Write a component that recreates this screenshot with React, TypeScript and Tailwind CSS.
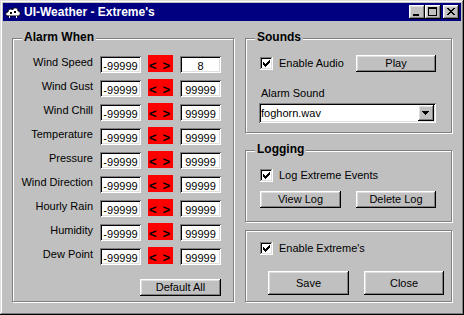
import React from "react";

const raised =
  "bg-[#c0c0c0] shadow-[inset_-1px_-1px_#000,inset_1px_1px_#fff,inset_-2px_-2px_#808080,inset_2px_2px_#dfdfdf]";
const sunken =
  "bg-white shadow-[inset_1px_1px_#808080,inset_-1px_-1px_#fff,inset_2px_2px_#000,inset_-2px_-2px_#dfdfdf]";

const rows = [
  { label: "Wind Speed", max: "8" },
  { label: "Wind Gust", max: "99999" },
  { label: "Wind Chill", max: "99999" },
  { label: "Temperature", max: "99999" },
  { label: "Pressure", max: "99999" },
  { label: "Wind Direction", max: "99999" },
  { label: "Hourly Rain", max: "99999" },
  { label: "Humidity", max: "99999" },
  { label: "Dew Point", max: "99999" },
];

// win95 check mark, pixel rows inside a 13x13 box
const checkPx: [number, number][] = [
  [9, 3], [8, 4], [9, 4], [3, 5], [7, 5], [8, 5], [9, 5],
  [3, 6], [4, 6], [6, 6], [7, 6], [8, 6],
  [3, 7], [4, 7], [5, 7], [6, 7], [7, 7],
  [4, 8], [5, 8], [6, 8], [5, 9],
];

function Checkbox({ label }: { label: string }) {
  return (
    <div className="flex items-center gap-[6px] h-[13px]">
      <svg width="13" height="13" viewBox="0 0 13 13" shapeRendering="crispEdges">
        <rect x="0" y="0" width="13" height="13" fill="#fff" />
        <rect x="0" y="0" width="12" height="1" fill="#808080" />
        <rect x="0" y="0" width="1" height="12" fill="#808080" />
        <rect x="1" y="1" width="10" height="1" fill="#000" />
        <rect x="1" y="1" width="1" height="10" fill="#000" />
        <rect x="1" y="11" width="11" height="1" fill="#dfdfdf" />
        <rect x="11" y="1" width="1" height="11" fill="#dfdfdf" />
        {checkPx.map(([x, y], i) => (
          <rect key={i} x={x} y={y} width="1" height="1" fill="#000" />
        ))}
      </svg>
      <span className="text-[11px] leading-[13px]">{label}</span>
    </div>
  );
}

function Button({ children, className }: { children: React.ReactNode; className: string }) {
  return (
    <div className={`${raised} flex items-center justify-center text-[11px] leading-[13px] ${className}`}>
      {children}
    </div>
  );
}

function Group({ title, className, children }: { title?: string; className: string; children?: React.ReactNode }) {
  return (
    <div className={`relative border border-[#808080] shadow-[inset_1px_1px_#fff,1px_1px_#fff] ${className}`}>
      {title && (
        <span className="absolute -top-[9px] left-[9px] px-[2px] bg-[#c0c0c0] text-[12px] leading-[14px] font-bold">
          {title}
        </span>
      )}
      {children}
    </div>
  );
}

function NumBox({ value }: { value: string }) {
  return (
    <div className={`${sunken} w-[41px] h-[17px] text-center text-[11px] leading-[11px] pt-[5px] whitespace-nowrap overflow-hidden`}>
      {value}
    </div>
  );
}

function TitleButton({ kind, className = "" }: { kind: "min" | "max" | "close"; className?: string }) {
  return (
    <div className={`${raised} w-[16px] h-[14px] ${className}`}>
      <svg width="16" height="14" viewBox="0 0 16 14" shapeRendering="crispEdges">
        {kind === "min" && <rect x="4" y="9" width="6" height="2" fill="#000" />}
        {kind === "max" && (
          <g fill="#000">
            <rect x="3" y="2" width="9" height="2" />
            <rect x="3" y="2" width="1" height="9" />
            <rect x="11" y="2" width="1" height="9" />
            <rect x="3" y="10" width="9" height="1" />
          </g>
        )}
        {kind === "close" && (
          <g fill="#000">
            {[0, 1, 2, 3, 4, 5, 6].map((i) => (
              <React.Fragment key={i}>
                <rect x={4 + i} y={3 + i} width="2" height="1" />
                <rect x={10 - i} y={3 + i} width="2" height="1" />
              </React.Fragment>
            ))}
          </g>
        )}
      </svg>
    </div>
  );
}

export default function App() {
  return (
    <div className="w-[464px] h-[315px] bg-[#c0c0c0] p-[3px] flex flex-col overflow-hidden text-black font-['Liberation_Sans',Arial,sans-serif] shadow-[inset_-1px_-1px_#000,inset_1px_1px_#dfdfdf,inset_-2px_-2px_#808080,inset_2px_2px_#fff]">
      {/* title bar */}
      <div className="h-[18px] bg-[#000080] flex items-center pl-[2px] pr-[2px]">
        <svg width="16" height="14" viewBox="0 0 16 14">
          <path
            d="M3 11 C0 11 0 7 3 7 C3 4 6 3 7.5 5 C8.5 2 13 2 13 6 C16 6 16 11 13 11 Z"
            fill="#fff"
            stroke="#000"
            strokeWidth="1"
          />
          <rect x="5" y="7" width="2" height="2" fill="#000" />
          <rect x="9" y="6" width="2" height="2" fill="#000" />
          <rect x="4" y="11" width="1" height="2" fill="#fff" />
          <rect x="11" y="11" width="1" height="2" fill="#fff" />
        </svg>
        <span className="ml-[3px] text-white font-bold text-[12px] leading-[14px]">UI-Weather - Extreme's</span>
        <div className="ml-auto flex">
          <TitleButton kind="min" />
          <TitleButton kind="max" />
          <TitleButton kind="close" className="ml-[2px]" />
        </div>
      </div>

      {/* body */}
      <div className="flex pl-[9px] pt-[17px]">
        <Group title="Alarm When" className="w-[222px] h-[264px]">
          <div className="flex flex-col gap-[7px] pt-[17px]">
            {rows.map((r) => (
              <div key={r.label} className="flex items-start h-[17px]">
                <span className="w-[80px] text-right text-[11px] leading-[13px] whitespace-nowrap">{r.label}</span>
                <div className="ml-[7px]">
                  <NumBox value="-99999" />
                </div>
                <div className="ml-[7px] -mt-[1px] w-[25px] h-[17px] bg-[#ff0000] flex pl-[1px] gap-[6px] text-[13px] leading-[13px] pt-[4px] font-bold overflow-hidden">
                  <span>&lt;</span>
                  <span>&gt;</span>
                </div>
                <div className="ml-[7px]">
                  <NumBox value={r.max} />
                </div>
              </div>
            ))}
          </div>
          <Button className="mt-[14px] ml-[127px] w-[81px] h-[17px]">Default All</Button>
        </Group>

        <div className="ml-[11px] w-[207px] flex flex-col">
          <Group title="Sounds" className="h-[95px]">
            <div className="mt-[16px] h-[17px] flex items-center justify-between pl-[14px] pr-[15px]">
              <Checkbox label="Enable Audio" />
              <Button className="w-[80px] h-[17px]">Play</Button>
            </div>
            <div className="mt-[15px] pl-[15px] text-[11px] leading-[13px]">Alarm Sound</div>
            <div className={`${sunken} mt-[3px] ml-[13px] w-[177px] h-[20px] flex`}>
              <span className="flex-1 pl-[2px] pt-[2px] text-[11px] leading-[16px]">foghorn.wav</span>
              <div className={`${raised} w-[16px] h-[16px] mt-[2px] mr-[2px]`}>
                <svg width="16" height="16" viewBox="0 0 16 16" shapeRendering="crispEdges">
                  <rect x="4" y="6" width="7" height="1" fill="#000" />
                  <rect x="5" y="7" width="5" height="1" fill="#000" />
                  <rect x="6" y="8" width="3" height="1" fill="#000" />
                  <rect x="7" y="9" width="1" height="1" fill="#000" />
                </svg>
              </div>
            </div>
          </Group>

          <Group title="Logging" className="mt-[17px] h-[72px]">
            <div className="mt-[18px] pl-[14px]">
              <Checkbox label="Log Extreme Events" />
            </div>
            <div className="mt-[9px] flex justify-between pl-[14px] pr-[15px]">
              <Button className="w-[81px] h-[17px]">View Log</Button>
              <Button className="w-[80px] h-[17px]">Delete Log</Button>
            </div>
          </Group>

          <Group className="mt-[8px] h-[72px]">
            <div className="mt-[11px] pl-[14px]">
              <Checkbox label="Enable Extreme's" />
            </div>
            <div className="mt-[16px] flex justify-between pl-[22px] pr-[7px]">
              <Button className="w-[81px] h-[24px]">Save</Button>
              <Button className="w-[80px] h-[24px]">Close</Button>
            </div>
          </Group>
        </div>
      </div>
    </div>
  );
}
